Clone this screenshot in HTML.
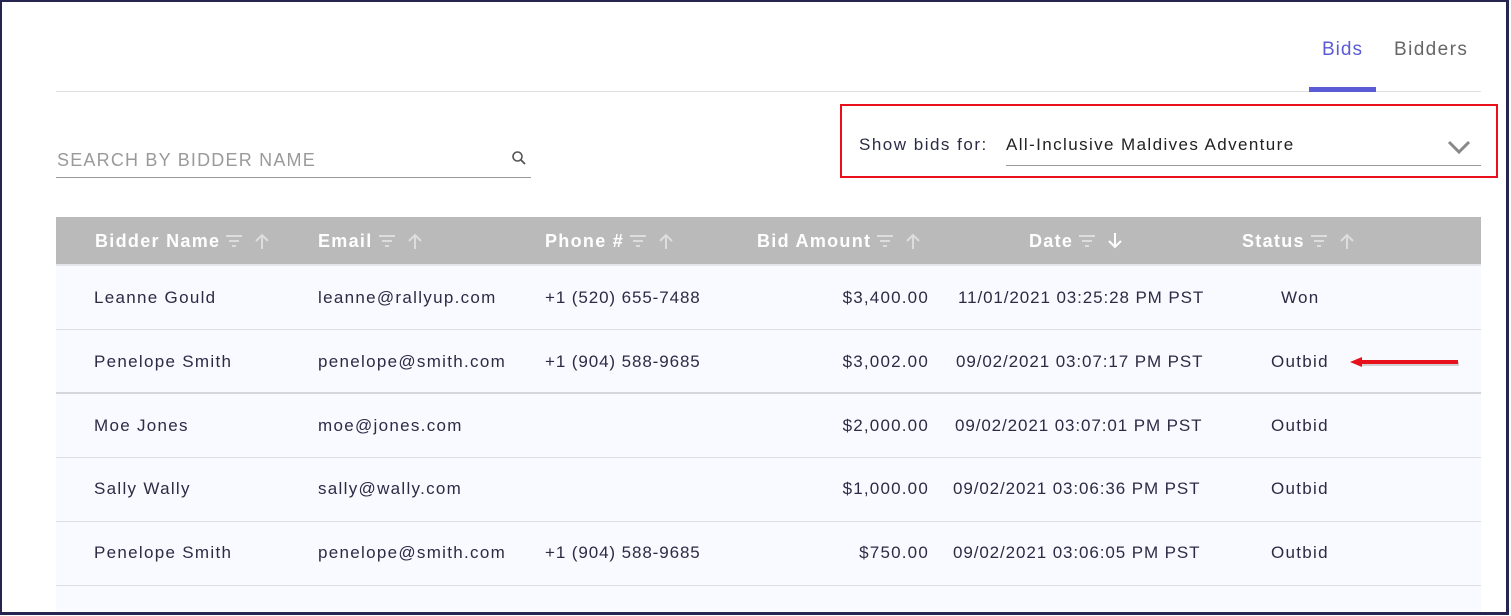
<!DOCTYPE html>
<html><head><meta charset="utf-8"><style>
*{margin:0;padding:0;box-sizing:border-box}
body{width:1511px;height:616px;background:#fff;font-family:"Liberation Sans",sans-serif;color:#2b2b45;position:relative;overflow:hidden}
.frame{position:absolute;left:0;top:0;width:1509px;height:615px;border:2px solid #25254f;border-right-width:3px;border-bottom-width:3px;z-index:5;pointer-events:none}
.a{position:absolute;white-space:nowrap}
.hdr{position:absolute;left:56px;top:217px;width:1425px;height:49px;background:#bababa;border-bottom:2px solid #e4e4ea}
.h{position:absolute;top:231px;color:#fff;font-weight:bold;font-size:18px;letter-spacing:1.3px}
.h svg{vertical-align:-2px;margin-left:6px}
.row{position:absolute;left:56px;width:1425px;height:64px;background:#f9faff;border-bottom:1px solid #dddde2}
.c{position:absolute;font-size:17px;white-space:nowrap;letter-spacing:1.3px}
.n{letter-spacing:0.9px}
.m{letter-spacing:1.2px;margin-right:-1px}
</style></head><body>
<div class="frame"></div>
<div class="a" style="left:1322px;top:39px;font-size:19px;color:#5b5bd6;letter-spacing:1px">Bids</div>
<div class="a" style="left:1394px;top:39px;font-size:19px;color:#666;letter-spacing:1.4px">Bidders</div>
<div class="a" style="left:56px;top:91px;width:1425px;height:1px;background:#e0e0e0"></div>
<div class="a" style="left:1309px;top:87px;width:67px;height:5px;background:#5b5bd6"></div>
<div class="a" style="left:57px;top:150px;font-size:18px;color:#9a9a9a;letter-spacing:1.2px">SEARCH BY BIDDER NAME</div>
<svg class="a" style="left:511px;top:150px" width="16" height="16" viewBox="0 0 16 16"><circle cx="6.5" cy="6.5" r="4.5" fill="none" stroke="#555" stroke-width="1.6"/><path d="M10 10l4 4" stroke="#555" stroke-width="1.8"/></svg>
<div class="a" style="left:56px;top:177px;width:475px;height:1px;background:#999"></div>
<div class="a" style="left:840px;top:104px;width:658px;height:74px;border:2px solid #e8101a"></div>
<div class="a" style="left:859px;top:135px;font-size:17px;letter-spacing:1.5px">Show bids for:</div>
<div class="a" style="left:1006px;top:135px;font-size:17px;color:#222;letter-spacing:1.4px">All-Inclusive Maldives Adventure</div>
<svg class="a" style="left:1447px;top:140px" width="24" height="14" viewBox="0 0 24 14"><path d="M2 2l10 10 10-10" fill="none" stroke="#888" stroke-width="3"/></svg>
<div class="a" style="left:1006px;top:165px;width:475px;height:1px;background:#999"></div>
<div class="hdr"></div>
<div class="h" style="left:95px">Bidder Name<svg width="44" height="16"><g stroke="#ddd" stroke-width="2"><path d="M0 3h16M3 8h10M6 13h4"/><path d="M36 16V2M30 8l6-6 6 6" fill="none"/></g></svg></div>
<div class="h" style="left:318px">Email<svg width="44" height="16"><g stroke="#ddd" stroke-width="2"><path d="M0 3h16M3 8h10M6 13h4"/><path d="M36 16V2M30 8l6-6 6 6" fill="none"/></g></svg></div>
<div class="h" style="left:545px">Phone #<svg width="44" height="16"><g stroke="#ddd" stroke-width="2"><path d="M0 3h16M3 8h10M6 13h4"/><path d="M36 16V2M30 8l6-6 6 6" fill="none"/></g></svg></div>
<div class="h" style="left:757px">Bid Amount<svg width="44" height="16"><g stroke="#ddd" stroke-width="2"><path d="M0 3h16M3 8h10M6 13h4"/><path d="M36 16V2M30 8l6-6 6 6" fill="none"/></g></svg></div>
<div class="h" style="left:1029px">Date<svg width="44" height="16"><g stroke="#ddd" stroke-width="2"><path d="M0 3h16M3 8h10M6 13h4"/></g><g stroke="#fff" stroke-width="2" fill="none"><path d="M36 0v14M30 8l6 6 6-6"/></g></svg></div>
<div class="h" style="left:1242px">Status<svg width="44" height="16"><g stroke="#ddd" stroke-width="2"><path d="M0 3h16M3 8h10M6 13h4"/><path d="M36 16V2M30 8l6-6 6 6" fill="none"/></g></svg></div>

<div class="row" style="top:266px"></div>
<div class="row" style="top:330px;border-bottom:2px solid #d6d6da"></div>
<div class="row" style="top:394px"></div>
<div class="row" style="top:458px"></div>
<div class="row" style="top:522px"></div>
<div class="row" style="top:586px;height:27px;border:none"></div>

<div class="c" style="left:94px;top:288px">Leanne Gould</div><div class="c" style="left:318px;top:288px">leanne@rallyup.com</div><div class="c n" style="left:545px;top:288px">+1 (520) 655-7488</div><div class="c m" style="right:583px;top:288px">$3,400.00</div><div class="c n" style="left:958px;top:288px">11/01/2021 03:25:28 PM PST</div><div class="c" style="left:1281px;top:288px">Won</div>
<div class="c" style="left:94px;top:352px">Penelope Smith</div><div class="c" style="left:318px;top:352px">penelope@smith.com</div><div class="c n" style="left:545px;top:352px">+1 (904) 588-9685</div><div class="c m" style="right:583px;top:352px">$3,002.00</div><div class="c n" style="left:956px;top:352px">09/02/2021 03:07:17 PM PST</div><div class="c" style="left:1271px;top:352px">Outbid</div>
<div class="c" style="left:94px;top:416px">Moe Jones</div><div class="c" style="left:318px;top:416px">moe@jones.com</div><div class="c m" style="right:583px;top:416px">$2,000.00</div><div class="c n" style="left:955px;top:416px">09/02/2021 03:07:01 PM PST</div><div class="c" style="left:1271px;top:416px">Outbid</div>
<div class="c" style="left:94px;top:479px">Sally Wally</div><div class="c" style="left:318px;top:479px">sally@wally.com</div><div class="c m" style="right:583px;top:479px">$1,000.00</div><div class="c n" style="left:953px;top:479px">09/02/2021 03:06:36 PM PST</div><div class="c" style="left:1271px;top:479px">Outbid</div>
<div class="c" style="left:94px;top:543px">Penelope Smith</div><div class="c" style="left:318px;top:543px">penelope@smith.com</div><div class="c n" style="left:545px;top:543px">+1 (904) 588-9685</div><div class="c m" style="right:583px;top:543px">$750.00</div><div class="c n" style="left:953px;top:543px">09/02/2021 03:06:05 PM PST</div><div class="c" style="left:1271px;top:543px">Outbid</div>

<svg class="a" style="left:1348px;top:355px" width="114" height="16"><path d="M12 7h98" stroke="#aaa" stroke-width="4" opacity=".5" transform="translate(1,2)"/><path d="M12 7h98" stroke="#e8101a" stroke-width="4"/><path d="M2 7l12-5v10z" fill="#e8101a"/></svg>
</body></html>
